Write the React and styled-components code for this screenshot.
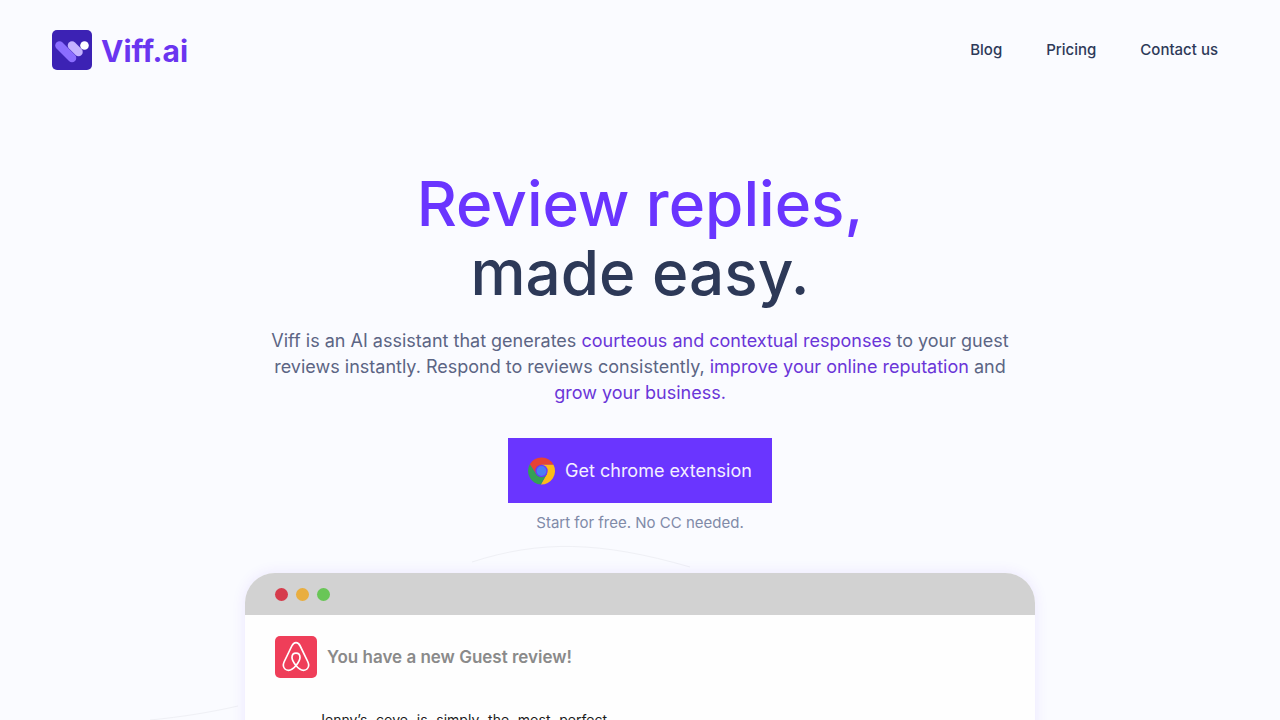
import React from 'react'
import styled, { createGlobalStyle } from 'styled-components'

const GlobalStyle = createGlobalStyle`
    * {
        box-sizing: border-box;
    }

    body {
        margin: 0;
        background: #fafbff;
        color: #2d3958;
        font-family: Inter, "Liberation Sans", sans-serif;
    }
`

const Page = styled.div`
    position: relative;
    height: 100vh;
    overflow: hidden;
`

const Backdrop = styled.svg`
    position: absolute;
    top: 0;
    left: 50%;
    margin-left: -640px;
    width: 1280px;
    height: 720px;
    pointer-events: none;
`

const Header = styled.header`
    position: relative;
    display: flex;
    align-items: center;
    justify-content: space-between;
    padding: 30px 62px 30px 52px;
`

const Brand = styled.a`
    display: flex;
    align-items: center;
    gap: 9px;
    color: #6a35f0;
    font-size: 30px;
    font-weight: 700;
    line-height: 40px;
    text-decoration: none;

    svg {
        display: block;
    }
`

const BrandName = styled.span`
    padding-top: 2px;
    line-height: 38px;
`

const Nav = styled.nav`
    display: flex;
    gap: 44px;
`

const NavLink = styled.a`
    color: #2d3958;
    font-size: 15px;
    font-weight: 500;
    line-height: 20px;
    text-decoration: none;
`

const Hero = styled.main`
    position: relative;
    display: flex;
    flex-direction: column;
    align-items: center;
    padding: 69px 20px 0;
    text-align: center;
`

const Title = styled.h1`
    margin: 0;
    font-size: 62px;
    font-weight: 500;
    line-height: 69px;
`

const TitleLine = styled.span`
    display: block;
    color: ${props => props.$accent ? '#6a35ff' : '#2d3958'};
`

const Lead = styled.p`
    max-width: 750px;
    margin: 21px 0 0;
    color: #5c6584;
    font-size: 18px;
    line-height: 26px;
`

const Accent = styled.span`
    color: #6a35d8;
`

const InstallButton = styled.button`
    display: flex;
    align-items: center;
    gap: 10px;
    height: 65px;
    margin-top: 32px;
    padding: 0 20px;
    border: none;
    background: #6a35ff;
    color: #f4efff;
    font-family: inherit;
    font-size: 18px;
    cursor: pointer;
`

const Note = styled.p`
    margin: 10px 0 0;
    color: #808aa8;
    font-size: 15px;
    line-height: 20px;
`

const Browser = styled.section`
    width: 100%;
    max-width: 790px;
    margin-top: 40px;
    border-radius: 30px 30px 0 0;
    background: #fefefe;
    box-shadow: 0 0 14px rgba(106, 53, 255, 0.1);
    overflow: hidden;
    text-align: left;
`

const TitleBar = styled.div`
    display: flex;
    align-items: center;
    gap: 8px;
    height: 42px;
    padding: 0 30px;
    background: #d2d2d2;
`

const Dot = styled.span`
    width: 13px;
    height: 13px;
    border-radius: 50%;
    background: ${props => props.$color};
`

const Message = styled.div`
    padding: 21px 30px 40px;
`

const MessageHead = styled.div`
    display: flex;
    align-items: center;
    gap: 10px;
`

const MessageTitle = styled.h2`
    margin: 0;
    color: #8a8a8a;
    font-size: 17px;
    font-weight: 600;
    line-height: 24px;
`

const Review = styled.p`
    width: 290px;
    margin: 30px 0 0 42px;
    color: #1c1c1c;
    font-size: 14px;
    line-height: 24px;
    white-space: nowrap;
    text-align: justify;
    text-align-last: justify;
`

const LogoMark = () => (
    <svg width="40" height="40" viewBox="0 0 40 40" aria-hidden="true">
        <rect width="40" height="40" rx="5" fill="#3c22b4" />
        <path d="M7.500 15.500 L20 28" stroke="#8b6dff" strokeWidth="8.500" strokeLinecap="round" />
        <path d="M20 15.500 L26.500 22" stroke="#c4b2ff" strokeWidth="8.500" strokeLinecap="round" />
        <circle cx="32.500" cy="15.500" r="4.300" fill="#fff" />
    </svg>
)

const ChromeIcon = () => (
    <svg width="27" height="28" viewBox="0 0 48 48" aria-hidden="true">
        <path d="M24 13 H45.330 A24 24 0 0 0 3.220 12 L14.470 29.500 Z" fill="#e64335" />
        <path d="M33.530 29.500 L22.870 47.970 A24 24 0 0 0 45.330 13 H24 Z" fill="#fbbc1a" />
        <path d="M14.470 29.500 L3.220 12 A24 24 0 0 0 22.870 47.970 L33.530 29.500 Z" fill="#34a155" />
        <circle cx="24" cy="24" r="11" fill="#6a35ff" />
        <circle cx="24" cy="24" r="8.700" fill="#4a7df5" />
    </svg>
)

const AirbnbIcon = () => (
    <svg width="42" height="42" viewBox="0 0 42 42" fill="none" aria-hidden="true">
        <rect width="42" height="42" rx="5" fill="#ef3e59" />
        <path
            d="M21 29.500 C18.500 26.500 17 24 17 21.500 C17 18.800 18.700 17.200 21 17.200 C23.300 17.200 25 18.800 25 21.500 C25 24 23.500 26.500 21 29.500 C18.500 32.700 16 34.300 13.500 34.300 C10.500 34.300 8.300 32 8.300 29 C8.300 27.800 8.700 26.800 9.300 25.500 L16.800 10 C17.900 7.800 19.200 6.700 21 6.700 C22.800 6.700 24.100 7.800 25.200 10 L32.700 25.500 C33.300 26.800 33.700 27.800 33.700 29 C33.700 32 31.500 34.300 28.500 34.300 C26 34.300 23.500 32.700 21 29.500 Z"
            stroke="#fff"
            strokeWidth="1.700"
            strokeLinejoin="round"
        />
    </svg>
)

const links = ['Blog', 'Pricing', 'Contact us']

const App = () => {
    const renderLinks = () => links.map(name => <NavLink key={name} href="#">{name}</NavLink>)

    return (
        <Page>
            <GlobalStyle />
            <Backdrop viewBox="0 0 1280 720" fill="none" stroke="#eff0f5" aria-hidden="true">
                <path d="M150 720 C182 717 212 712 238 706" />
                <path d="M472 562 C540 540 600 541 690 567" />
            </Backdrop>

            <Header>
                <Brand href="#"><LogoMark /><BrandName>Viff.ai</BrandName></Brand>
                <Nav>{renderLinks()}</Nav>
            </Header>

            <Hero>
                <Title>
                    <TitleLine $accent>Review replies,</TitleLine>
                    <TitleLine>made easy.</TitleLine>
                </Title>
                <Lead>
                    Viff is an AI assistant that generates <Accent>courteous and contextual responses</Accent> to
                    your guest reviews instantly. Respond to reviews consistently, <Accent>improve your online
                    reputation</Accent> and <Accent>grow your business.</Accent>
                </Lead>
                <InstallButton type="button"><ChromeIcon />Get chrome extension</InstallButton>
                <Note>Start for free. No CC needed.</Note>

                <Browser>
                    <TitleBar>
                        <Dot $color="#d63c4c" />
                        <Dot $color="#e9ae3f" />
                        <Dot $color="#69c657" />
                    </TitleBar>
                    <Message>
                        <MessageHead>
                            <AirbnbIcon />
                            <MessageTitle>You have a new Guest review!</MessageTitle>
                        </MessageHead>
                        <Review>Jenny’s cove is simply the most perfect</Review>
                    </Message>
                </Browser>
            </Hero>
        </Page>
    )
}

export default App
